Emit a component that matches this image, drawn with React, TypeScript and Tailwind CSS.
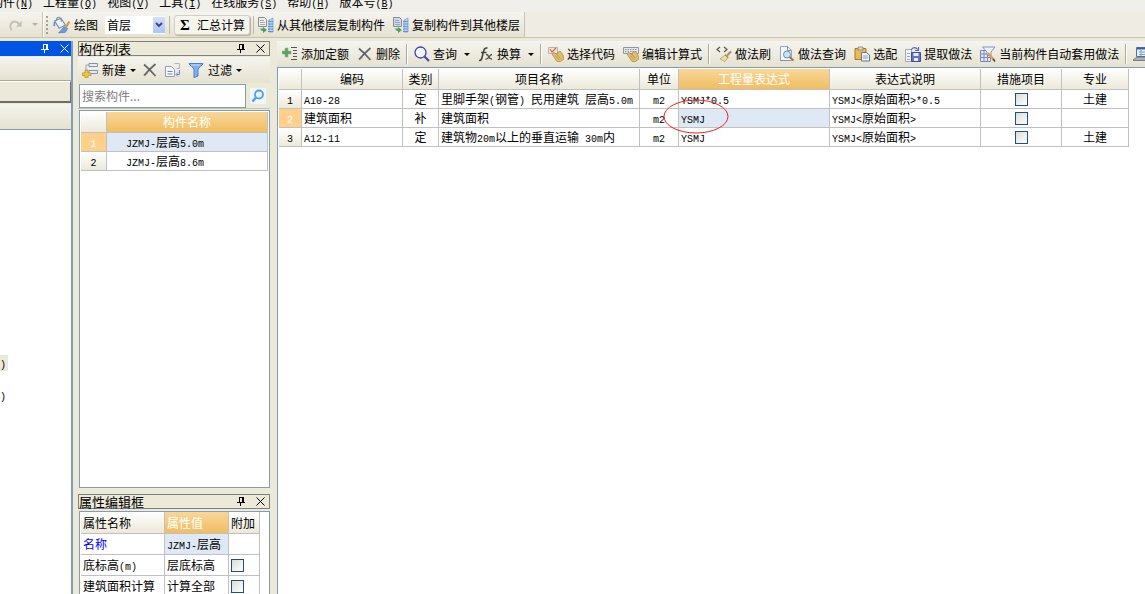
import type { ReactNode } from "react";

// Latin runs sit in a half-width mono face beside the full-width Chinese glyphs
const Mixed = ({ text }: { text: string }) => (
  <>
    {text.split(/([\x20-\x7e]+)/).map((part, i) =>
      /^[\x20-\x7e]+$/.test(part) ? (
        <span key={i} className="whitespace-pre font-['Liberation_Mono',monospace] text-[10px] leading-none">{part}</span>
      ) : (
        part
      )
    )}
  </>
);

const Svg = ({ children, size = "size-4" }: { children: ReactNode; size?: string }) => (
  <svg viewBox="0 0 16 16" className={`${size} shrink-0`} fill="none" aria-hidden="true">
    {children}
  </svg>
);

const Caret = ({ className = "text-black" }: { className?: string }) => (
  <svg viewBox="0 0 6 3" className={`h-[3px] w-[6px] shrink-0 ${className}`} aria-hidden="true">
    <path d="M0 0h6L3 3z" fill="currentColor" />
  </svg>
);

const AddIcon = () => (
  <Svg>
    <path d="M3 2h3v3h3v3H6v3H3V8H0V5h3z" fill="#5fa05f" stroke="#8fb890" strokeWidth=".6" />
    <path d="M9 1.500h6M11 4.500h4M11 7.500h4M11 10.500h4M9 13.500h6" stroke="#555" />
  </Svg>
);

const DeleteIcon = () => (
  <Svg>
    <path d="M2 2.500C5 5 10 10 13.500 14M13.500 2C10 5 5 10 2 13.500" stroke="#666" strokeWidth="1.700" />
    <path d="M3 14.200l3-3.200" stroke="#aaa" />
  </Svg>
);

const SearchIcon = () => (
  <Svg>
    <circle cx="6.500" cy="6.500" r="5.500" fill="#f4f6ff" stroke="#4040a8" strokeWidth="1.300" />
    <path d="M10.500 10.500l4.500 4.500" stroke="#4a46b0" strokeWidth="2.200" />
  </Svg>
);

const FxIcon = () => (
  <Svg>
    <path d="M1 14.500c3 .500 3-3 4-7s1.500-6 4.500-5.500M3 6.500h5.500" stroke="#444" strokeWidth="1.600" />
    <path d="M8 8.500c3-1 2 5 6 4.500M14 8.500c-3 0-3 5-6.500 4.800" stroke="#555" strokeWidth="1.400" />
  </Svg>
);

const Hand = () => (
  <>
    <path d="M4 8l2-1.500 3 2 1-2.500 2.500-.500 2.500 3.500 1 4-3.500 2.500H9z" fill="#e2bd6c" stroke="#a88643" strokeWidth=".7" />
    <path d="M7 9.500l4 4M9 8.500l3.500 4" stroke="#a88643" strokeWidth=".7" />
  </>
);

const PickIcon = () => (
  <Svg>
    <path d="M.5 1.500h9v6h-9z" fill="#f4e4e0" stroke="#b9b2b2" />
    <path d="M2 3l2 3 4-4" stroke="#d9604e" strokeWidth="1.200" />
    <Hand />
  </Svg>
);

const KeyboardIcon = () => (
  <Svg>
    <path d="M.5 1.500h15v6H.5z" fill="#e6e8ee" stroke="#8c94a6" />
    <path d="M2 3.500h12M2 5.500h12" stroke="#8791a8" strokeDasharray="1.500 1" />
    <Hand />
  </Svg>
);

const BrushIcon = () => (
  <Svg>
    <path d="M4 1L1 3.500 4 6M8 1l3 2.500L8 6" stroke="#555" strokeWidth="1.200" />
    <path d="M15 5.500l-4 4" stroke="#a88d62" strokeWidth="2" />
    <path d="M9.500 8.500l3 2.500-3.500 4.500-5-2.500z" fill="#ecdf9a" stroke="#a79a63" strokeWidth=".7" />
    <path d="M9 9l3 2.500" stroke="#777" />
  </Svg>
);

const PreviewIcon = () => (
  <Svg>
    <path d="M1.500.5h7l4 4v10h-11z" fill="#f4f8fd" stroke="#98a6bd" />
    <path d="M8.500.5v4h4M1 14.500h10" stroke="#7d92b5" />
    <circle cx="8" cy="8.500" r="3.500" fill="#c8e4f4" stroke="#6e8da8" />
    <path d="M10.500 11l4 3.500" stroke="#a8733c" strokeWidth="2" />
  </Svg>
);

const PasteIcon = () => (
  <Svg>
    <path d="M1 2.500h11v11H1z" fill="#eeb84c" stroke="#a87b2d" />
    <path d="M4 1h5v3H4z" fill="#d9d9d9" stroke="#777" strokeWidth=".7" />
    <path d="M7.500 6.500h5l3 2.500v6h-8z" fill="#eef2f9" stroke="#66758e" />
    <path d="M9 10h5M9 12h5" stroke="#8fa0ba" />
  </Svg>
);

const ExtractIcon = () => (
  <Svg>
    <path d="M.5 3.500h6v12h-6z" fill="#f2f4f8" stroke="#a0a8b8" />
    <path d="M2 7.500h3M2 10.500h3M2 13.500h3" stroke="#a0a8b8" />
    <path d="M6.500 6.500h9v9h-9z" fill="#6673c4" stroke="#414c99" />
    <path d="M8.500 7h5v3h-5zM9 12h4v3H9z" fill="#e9edfb" />
    <path d="M6 4c2-3 5-3 6.500-.5M13.500 1v3.500H10" stroke="#5868b0" strokeWidth="1.200" />
  </Svg>
);

const AutoIcon = () => (
  <Svg>
    <path d="M.5 4.500h10v11H.5zM4 4.500v11M7.500 4.500v11M.5 8h10M.5 11.500h10" fill="#e4e8f8" stroke="#7c87bd" />
    <path d="M2.500 1h12.500l-4 5v5L7 8.500V6z" fill="#f2f2fb" stroke="#7c87bd" strokeWidth=".9" />
    <path d="M8 7l6 7" stroke="#dba23d" strokeWidth="2.200" />
    <path d="M13 13l2 2.500" stroke="#444" strokeWidth="1.500" />
  </Svg>
);

const MonitorIcon = () => (
  <Svg>
    <path d="M3.500 1.500h12v9h-12z" fill="#e5edfa" stroke="#54709f" />
    <path d="M4 2.500h12" stroke="#3d62a4" strokeWidth="2" />
    <path d="M6 6h8M6 8.500h8M8 4v6" stroke="#8aa2c9" />
    <path d="M0 14l4-3h11v3.500H0z" fill="#aab1bc" stroke="#626b79" strokeWidth=".8" />
  </Svg>
);

const CopyFloorIcon = ({ tint }: { tint: string }) => (
  <Svg>
    <path d="M.5.5h6l2 2v7h-8z" fill={tint} stroke="#8a8a8a" />
    <path d="M2 3.500h4M2 5.500h5M2 7.500h5" stroke="#999" strokeWidth=".8" />
    <path d="M11 3l4-2v14h-4z" fill="#b9d4f4" stroke="#6b9ad4" strokeWidth=".7" />
    <path d="M10 4.500h5M10 7h5M10 9.500h5M10 12h5M10 14.500h5" stroke="#5a8dcf" strokeWidth=".9" />
    <path d="M2 11.500h3V10l4 3-4 3v-2c-1.500 0-2.500-1-3-2.500z" fill="#45a06a" />
  </Svg>
);

const DrawIcon = () => (
  <Svg size="size-[18px]">
    <path d="M1.500 4.500L7 2l4 6-5.500 3z" fill="#edf2fa" stroke="#7b8ba6" />
    <path d="M3 4c0-4 4-4 4.500 1" stroke="#7b8ba6" />
    <path d="M1.500 5L1 9" stroke="#5c8dd5" strokeWidth="1.500" />
    <path d="M14.500 5l-3 5" stroke="#d49b43" strokeWidth="2" />
    <path d="M10 9.500l3 1.500-2 3.500-6 .500z" fill="#6c9de0" stroke="#4a74b5" strokeWidth=".6" />
  </Svg>
);

const RedoIcon = () => (
  <Svg size="size-3.5">
    <path d="M3 14C-.5 8 3 3.500 7 4c2 .2 3.500 1.500 5 3.500" stroke="#c3c1b6" strokeWidth="2.200" />
    <path d="M14.500 3v7H8z" fill="#c3c1b6" />
  </Svg>
);

const NewIcon = () => (
  <Svg>
    <path d="M7 1.500h8.500v3H7zM7 8.500h8.500v3H7z" fill="#e4eaf6" stroke="#8190ad" />
    <path d="M4 3v6M4 3h3" stroke="#9aa5bb" />
    <path d="M3 8h3v3h3v2.500H6V16H3v-2.500H0V11h3z" fill="#f1c93f" stroke="#a98b28" strokeWidth=".7" />
  </Svg>
);

const CopyIcon = () => (
  <Svg>
    <path d="M.5 4.500h6l3 3v7h-9z" fill="#f6f8fc" stroke="#8d9bc1" />
    <path d="M2.500 9.500h5M2.500 12h5" stroke="#7184b8" />
    <path d="M9.500 1.500h5v5h-3" stroke="#a9b3cf" />
    <path d="M14.500 8v4.500h-3M13 10.500l-2 2 2 2" stroke="#7184d8" />
  </Svg>
);

const FilterIcon = () => (
  <Svg>
    <path d="M1 1.500h14c0 2-5 4-5 6V14l-4 1.500v-8c0-2-5-4-5-6z" fill="#7fb2ee" stroke="#4a7fc8" />
    <path d="M3 3h9" stroke="#c6dffa" />
  </Svg>
);

const Pin = () => (
  <svg viewBox="0 0 9 9" className="size-[9px]" fill="none" stroke="currentColor" aria-hidden="true">
    <path d="M2 .5h5M2.500 0v5M0 5.500h8M3.500 6v3" />
    <path d="M6 0v5" strokeWidth="2" />
  </svg>
);

const Cross = () => (
  <svg viewBox="0 0 9 9" className="size-[9px]" fill="none" stroke="currentColor" aria-hidden="true">
    <path d="M.5.5l8 8M8.500.5l-8 8" />
  </svg>
);

const WindowButtons = () => (
  <span className="flex items-center gap-2.5">
    <button type="button" aria-label="固定"><Pin /></button>
    <button type="button" aria-label="关闭"><Cross /></button>
  </span>
);

const Tool = ({ icon, label, menu }: { icon: ReactNode; label?: string; menu?: boolean }) => (
  <button type="button" className="flex shrink-0 items-center gap-[3px] px-1" aria-label={label ?? "工具"}>
    {icon}
    {label}
    {menu && <Caret className="ml-1 text-black" />}
  </button>
);

const Sep = () => <span className="mx-0.5 h-5 w-[2px] shrink-0 border-l border-[#aca899] bg-white" />;

const PanelTitle = ({ title }: { title: string }) => (
  <div className="flex h-[15px] shrink-0 items-center justify-between border border-[#808080] pr-1 text-[13px] leading-[13px]">
    <h2>{title}</h2>
    <WindowButtons />
  </div>
);

const Check = ({ label }: { label: string }) => (
  <input
    type="checkbox"
    aria-label={label}
    className="block size-[13px] appearance-none border border-[#1c5180] bg-linear-to-br from-[#dcdcd7] to-white"
  />
);

const MENUS = [
  ["构件", "N"], ["工程量", "Q"], ["视图", "V"], ["工具", "I"],
  ["在线服务", "S"], ["帮助", "H"], ["版本号", "B"],
];

const COMPONENTS = ["JZMJ-层高5.0m", "JZMJ-层高8.6m"];

const COLUMNS = [
  { name: "编码", width: "w-[101px]" },
  { name: "类别", width: "w-[36px]" },
  { name: "项目名称", width: "w-[201px]" },
  { name: "单位", width: "w-[39px]" },
  { name: "工程量表达式", width: "w-[151px]" },
  { name: "表达式说明", width: "w-[151px]" },
  { name: "措施项目", width: "w-[81px]" },
  { name: "专业", width: "w-[67px]" },
];

const ROWS = [
  { code: "A10-28", kind: "定", name: "里脚手架(钢管) 民用建筑 层高5.0m", expr: "YSMJ*0.5", note: "YSMJ<原始面积>*0.5", major: "土建" },
  { code: "建筑面积", kind: "补", name: "建筑面积", expr: "YSMJ", note: "YSMJ<原始面积>", major: "" },
  { code: "A12-11", kind: "定", name: "建筑物20m以上的垂直运输 30m内", expr: "YSMJ", note: "YSMJ<原始面积>", major: "土建" },
];

const PROPS = [
  { name: "名称", value: "JZMJ-层高" },
  { name: "底标高(m)", value: "层底标高" },
  { name: "建筑面积计算", value: "计算全部" },
];

const cell = "border-r border-b border-[#c0c0c0] p-0 font-normal";
const head = `${cell} bg-linear-to-b from-white to-[#ece9d8]`;
const headOn = `${cell} bg-linear-to-b from-[#f9d798] to-[#f0bd60] text-white`;
const bar = "bg-linear-to-b from-[#f5f4ef] to-[#e6e2d0]";

const MenuBar = () => (
  <nav className="flex h-3 shrink-0 items-end bg-[#f0efe9] pb-0.5">
    <ul className="-ml-[9px] flex gap-2.5 leading-3">
      {MENUS.map(([name, key]) => (
        <li key={name}>
          <a href="#" className="whitespace-nowrap">
            {name}
            <span className="font-['Liberation_Mono',monospace] text-[10px] leading-none">(<u>{key}</u>)</span>
          </a>
        </li>
      ))}
    </ul>
  </nav>
);

const MainToolbar = () => (
  <div className="flex h-[26px] shrink-0 items-stretch border-b border-[#c5c2b0] bg-[#efede3]">
    <div className={`flex items-center border-r border-[#c5c2b0] ${bar}`}>
      <button type="button" aria-label="恢复" className="ml-[9px] flex items-center gap-[9px]">
        <RedoIcon />
        <Caret className="text-[#b5b2a6]" />
      </button>
      <span className="ml-1 h-full w-[2px] border-l border-[#c5c2b0] bg-white" />
      <span className="ml-0.5 h-[18px] w-[2px] border-l-2 border-dotted border-[#a5a293]" />
      <button type="button" className="ml-[5px] flex items-center gap-[3px]">
        <DrawIcon />
        绘图
      </button>
      <label className="relative ml-[7px] flex items-center">
        <select aria-label="楼层" className="h-[18px] w-[60px] appearance-none bg-white pl-0.5 leading-4">
          <option>首层</option>
        </select>
        <span className="pointer-events-none absolute inset-y-px right-0 flex w-3 items-center justify-center bg-linear-to-b from-[#d3dffc] to-[#acc3f6]">
          <svg viewBox="0 0 8 6" className="h-1.5 w-2" fill="none" aria-hidden="true">
            <path d="M1 1l3 3 3-3" stroke="#33466e" strokeWidth="1.800" />
          </svg>
        </span>
      </label>
      <span className="mx-1 h-[18px] w-px bg-[#bdbaa8]" />
      <button
        type="button"
        className="flex h-5 items-center gap-1.5 rounded-[3px] border border-[#d3d0c0] bg-[#f5f4ed] px-1 shadow-[1px_1px_1px_#b5b2a2]"
      >
        <span className="w-3 text-center font-['Liberation_Serif',serif] text-[15px] leading-4 font-bold">Σ</span>
        汇总计算
      </button>
      <span className="ml-[3px] h-[18px] w-px bg-[#bdbaa8]" />
      <Tool icon={<CopyFloorIcon tint="#f0f0f0" />} label="从其他楼层复制构件" />
      <Tool icon={<CopyFloorIcon tint="#c6dbfa" />} label="复制构件到其他楼层" />
    </div>
  </div>
);

const LeftDock = () => (
  <aside className="flex w-[73px] shrink-0 flex-col overflow-hidden border-r-2 border-[#7f9db9]">
    <div className="flex h-[15px] shrink-0 items-center justify-end bg-[#0054e3] pr-0.5 text-white">
      <WindowButtons />
    </div>
    <div className={`mt-px h-6 shrink-0 border-b border-[#aca899] ${bar}`} />
    <div className="h-[22px] shrink-0 border-t border-r border-b-2 border-t-white border-r-[#716f64] border-b-[#716f64] bg-[#ece9d8]" />
    <div className={`mt-px h-[25px] shrink-0 ${bar}`} />
    <div className="flex grow flex-col items-start gap-4 border-t border-[#7f9db9] bg-white pt-[225px]">
      <span className="w-2 bg-[#ece9d8] leading-4"><Mixed text=")" /></span>
      <span className="w-2 leading-4"><Mixed text=")" /></span>
    </div>
  </aside>
);

const ComponentPanel = () => (
  <section className="flex min-h-0 grow flex-col">
    <PanelTitle title="构件列表" />
    <div className={`mt-px flex h-[26px] shrink-0 items-center pl-1 ${bar}`}>
      <button type="button" className="flex items-center gap-1">
        <NewIcon />
        新建
        <Caret />
      </button>
      <span className="ml-1 flex items-center gap-[3px]">
        <button type="button" aria-label="删除" className="px-0.5"><DeleteIcon /></button>
        <button type="button" aria-label="复制" className="px-0.5"><CopyIcon /></button>
        <button type="button" className="flex items-center gap-1 px-0.5">
          <FilterIcon />
          过滤
          <Caret />
        </button>
      </span>
    </div>
    <div className="flex h-[26px] shrink-0 items-center gap-1 border-b border-[#c5c2b0] pl-px">
      <input
        type="text"
        aria-label="搜索构件"
        placeholder="搜索构件..."
        className="h-6 min-w-0 grow border border-[#7f9db9] bg-white px-0.5 outline-none placeholder:text-[#808080]"
      />
      <button type="button" aria-label="搜索" className="mr-1 flex size-4 items-center justify-center bg-[#eef5fb]">
        <svg viewBox="0 0 14 14" className="size-3.5" fill="none" aria-hidden="true">
          <circle cx="8" cy="5.500" r="4" fill="#e4f3fd" stroke="#4aa3e0" strokeWidth="1.800" />
          <path d="M5 8.500L1.500 12.500" stroke="#4aa3e0" strokeWidth="2.400" />
        </svg>
      </button>
    </div>
    <div className="mt-px ml-px grow border border-[#7f9db9] bg-white p-px">
      <table className="w-full table-fixed border-separate border-spacing-0 text-center">
        <thead>
          <tr className="h-[21px]">
            <th className={`${head} w-[26px]`} />
            <th className={headOn}>构件名称</th>
          </tr>
        </thead>
        <tbody>
          {COMPONENTS.map((name, i) => (
            <tr key={name} className="h-[19px]">
              <th className={i === 0 ? `${cell} bg-[#ffd08a] text-white` : head}><Mixed text={String(i + 1)} /></th>
              <td className={`${cell} pl-[19px] text-left ${i === 0 ? "bg-[#dfe8f5]" : "bg-white"}`}><Mixed text={name} /></td>
            </tr>
          ))}
        </tbody>
      </table>
    </div>
  </section>
);

const PropertyPanel = () => (
  <section className="mt-1.5 flex h-[100px] shrink-0 flex-col overflow-hidden">
    <PanelTitle title="属性编辑框" />
    <div className="mt-0.5 ml-px grow border border-[#7f9db9] bg-white pl-px">
      <table className="w-[179px] table-fixed border-separate border-spacing-0 whitespace-nowrap text-left">
        <thead>
          <tr className="h-[22px]">
            <th className={`${head} w-[84px] pl-0.5`}>属性名称</th>
            <th className={`${headOn} w-[64px] pl-0.5`}>属性值</th>
            <th className={`${head} pl-0.5`}>附加</th>
          </tr>
        </thead>
        <tbody>
          {PROPS.map(({ name, value }, i) => (
            <tr key={name} className="h-[21px]">
              <td className={`${cell} pl-0.5 ${i === 0 ? "text-[#0000ff]" : ""}`}><Mixed text={name} /></td>
              <td className={`${cell} pl-0.5 ${i === 0 ? "bg-[#dfe8f5]" : ""}`}><Mixed text={value} /></td>
              <td className={`${cell} pl-0.5`}>{i > 0 && <Check label={`附加 ${name}`} />}</td>
            </tr>
          ))}
        </tbody>
      </table>
    </div>
  </section>
);

const QuotaToolbar = () => (
  <div className={`flex h-[26px] shrink-0 items-center overflow-hidden pl-px ${bar}`}>
    <Tool icon={<AddIcon />} label="添加定额" />
    <Tool icon={<DeleteIcon />} label="删除" />
    <Sep />
    <Tool icon={<SearchIcon />} label="查询" menu />
    <Tool icon={<FxIcon />} label="换算" menu />
    <Sep />
    <Tool icon={<PickIcon />} label="选择代码" />
    <Tool icon={<KeyboardIcon />} label="编辑计算式" />
    <Sep />
    <Tool icon={<BrushIcon />} label="做法刷" />
    <Tool icon={<PreviewIcon />} label="做法查询" />
    <Tool icon={<PasteIcon />} label="选配" />
    <Tool icon={<ExtractIcon />} label="提取做法" />
    <Tool icon={<AutoIcon />} label="当前构件自动套用做法" />
    <Sep />
    <Tool icon={<MonitorIcon />} />
  </div>
);

const QuotaTable = () => (
  <table className="w-[850px] table-fixed border-separate border-spacing-0 whitespace-nowrap text-center">
    <thead>
      <tr className="h-[21px]">
        <th className={`${head} w-[23px]`} />
        {COLUMNS.map(({ name, width }, i) => (
          <th key={name} className={`${i === 4 ? headOn : head} ${width}`}>{name}</th>
        ))}
      </tr>
    </thead>
    <tbody>
      {ROWS.map((row, i) => (
        <tr key={row.code} className="h-[19px]">
          <th className={i === 1 ? `${cell} bg-[#ffd08a] text-white` : head}><Mixed text={String(i + 1)} /></th>
          <td className={`${cell} pl-0.5 text-left`}><Mixed text={row.code} /></td>
          <td className={cell}>{row.kind}</td>
          <td className={`${cell} pl-0.5 text-left`}><Mixed text={row.name} /></td>
          <td className={cell}><Mixed text="m2" /></td>
          <td className={`${cell} relative pl-0.5 text-left ${i === 1 ? "bg-[#dfe8f5]" : ""}`}>
            <Mixed text={row.expr} />
            {i === 1 && (
              <svg viewBox="0 0 66 35" className="absolute -top-2.5 -left-4 h-[35px] w-[66px]" fill="none" aria-hidden="true">
                <ellipse cx="33" cy="17.500" rx="32" ry="16.500" stroke="#f02020" />
              </svg>
            )}
          </td>
          <td className={`${cell} pl-0.5 text-left`}><Mixed text={row.note} /></td>
          <td className={cell}>
            <span className="flex justify-center"><Check label={`措施项目 ${row.code}`} /></span>
          </td>
          <td className={cell}>{row.major}</td>
        </tr>
      ))}
    </tbody>
  </table>
);

export default function App() {
  return (
    <div className="flex h-screen flex-col overflow-hidden bg-[#ece9d8] font-['Noto_Sans_CJK_SC',sans-serif] text-xs leading-4 text-black">
      <MenuBar />
      <MainToolbar />
      <div className="flex min-h-0 grow pt-[3px]">
        <LeftDock />
        <div className="ml-[5px] flex w-[192px] shrink-0 flex-col">
          <ComponentPanel />
          <PropertyPanel />
        </div>
        <main className="ml-[7px] flex min-w-0 grow flex-col">
          <QuotaToolbar />
          <div className="grow border-t border-l border-[#7f9db9] bg-white pt-px pl-px">
            <QuotaTable />
          </div>
        </main>
      </div>
    </div>
  );
}
